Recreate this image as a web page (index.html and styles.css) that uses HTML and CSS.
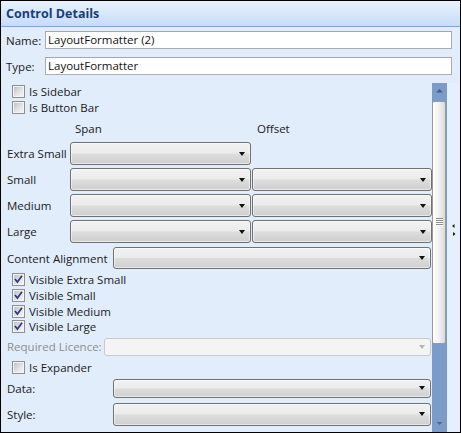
FILE: index.html
```html
<!DOCTYPE html>
<html>
<head>
<meta charset="utf-8">
<link rel="stylesheet" href="styles.css">
</head>
<body>
<div class="panel">
  <div class="header">Control Details</div>
  <div class="field first"><span class="flabel">Name:</span><div class="textbox">LayoutFormatter (2)</div></div>
  <div class="field"><span class="flabel">Type:</span><div class="textbox">LayoutFormatter</div></div>
  <div class="body">
    <div class="content">
      <div class="check"><span class="box"></span><span>Is Sidebar</span></div>
      <div class="check"><span class="box"></span><span>Is Button Bar</span></div>

      <div class="grid">
        <div class="head-row"><span></span><span class="colhead">Span</span><span class="colhead">Offset</span></div>
        <div class="grow xs"><span class="rlabel">Extra Small</span><div class="combo"><i class="arrow"></i></div></div>
        <div class="grow"><span class="rlabel">Small</span><div class="combo"><i class="arrow"></i></div><div class="combo"><i class="arrow"></i></div></div>
        <div class="grow"><span class="rlabel">Medium</span><div class="combo"><i class="arrow"></i></div><div class="combo"><i class="arrow"></i></div></div>
        <div class="grow"><span class="rlabel">Large</span><div class="combo"><i class="arrow"></i></div><div class="combo"><i class="arrow"></i></div></div>
      </div>

      <div class="row align"><span class="rlabel wide">Content Alignment</span><div class="combo fill"><i class="arrow"></i></div></div>

      <div class="checks">
        <div class="check"><span class="box on"><svg viewBox="0 0 13 13" width="13" height="13"><path d="M3.4 6.6 L5.4 9 L9.5 3.4" /></svg></span><span>Visible Extra Small</span></div>
        <div class="check"><span class="box on"><svg viewBox="0 0 13 13" width="13" height="13"><path d="M3.4 6.6 L5.4 9 L9.5 3.4" /></svg></span><span>Visible Small</span></div>
        <div class="check"><span class="box on"><svg viewBox="0 0 13 13" width="13" height="13"><path d="M3.4 6.6 L5.4 9 L9.5 3.4" /></svg></span><span>Visible Medium</span></div>
        <div class="check"><span class="box on"><svg viewBox="0 0 13 13" width="13" height="13"><path d="M3.4 6.6 L5.4 9 L9.5 3.4" /></svg></span><span>Visible Large</span></div>
      </div>

      <div class="row licence"><span class="rlabel lic disabled">Required Licence:</span><div class="combo fill off"><i class="arrow"></i></div></div>

      <div class="check expander"><span class="box"></span><span>Is Expander</span></div>

      <div class="row data"><span class="rlabel wide">Data:</span><div class="combo fill"><i class="arrow"></i></div></div>
      <div class="row style"><span class="rlabel wide">Style:</span><div class="combo fill"><i class="arrow"></i></div></div>
    </div>

    <div class="scrollbar">
      <div class="sb-btn"><svg width="15" height="18" viewBox="0 0 15 18"><path d="M4 9.5 L7.5 6 L11 9.5 Z" fill="#3f5f8f"/></svg></div>
      <div class="thumb">
        <div class="grip"><i></i><i></i><i></i><i></i></div>
      </div>
      <div class="track"></div>
      <div class="sb-btn"><svg width="15" height="18" viewBox="0 0 15 18"><path d="M4.5 8 L10.5 8 L7.5 11 Z" fill="#4d6a96"/></svg></div>
    </div>

    <div class="splitter">
      <svg width="13" height="14" viewBox="0 0 13 14"><path d="M5 2 L7.5 0 L7.5 4 Z" fill="#1a1a1a"/><path d="M6 8 L8.5 10 L6 12 Z" fill="#1a1a1a"/></svg>
    </div>
  </div>
</div>
</body>
</html>
```

FILE: styles.css
```css
* { box-sizing: border-box; }
html, body { margin: 0; padding: 0; background: #ffffff; }
body {
  font-family: "Open Sans", "Noto Sans", "Liberation Sans", sans-serif;
  font-size: 11.5px;
  color: #1a1a1a;
}
.panel {
  width: 461px;
  height: 433px;
  border: 1px solid #000;
  background: #e2edfb;
  display: flex;
  flex-direction: column;
  overflow: hidden;
}
.header {
  height: 26px;
  flex: none;
  border-bottom: 1px solid #7ea6da;
  background: linear-gradient(#e9f2fd, #d6e6fb 55%, #c4dcfa);
  color: #1b3d7a;
  font-weight: bold;
  font-size: 12.5px;
  line-height: 26px;
  padding-left: 5px;
}
.field {
  display: flex;
  align-items: center;
  height: 18px;
  margin-top: 8px;
  flex: none;
}
.field.first { margin-top: 4px; }
.flabel {
  width: 44px;
  padding-left: 5px;
  flex: none;
}
.textbox {
  width: 407px;
  height: 18px;
  border: 1px solid #abadb3;
  border-top-color: #a4a7ad;
  background: #fff;
  padding-left: 2px;
  line-height: 16px;
  color: #111;
}
.body {
  margin-top: 8px;
  flex: 1;
  display: flex;
  min-height: 0;
}
.content {
  width: 431px;
  flex: none;
  display: flex;
  flex-direction: column;
}
.check {
  height: 16px;
  display: flex;
  align-items: center;
  padding-left: 11px;
  gap: 4px;
}
.box {
  width: 13px;
  height: 13px;
  flex: none;
  border: 1px solid #8e8f8f;
  background: #f4f4f4;
  position: relative;
}
.box::before {
  content: "";
  position: absolute;
  left: 1px; top: 1px; right: 1px; bottom: 1px;
  background: linear-gradient(135deg, #bfc3c8, #e4e5e7 60%, #f4f4f4);
}
.box svg { position: absolute; left: -1px; top: -1px; z-index: 1; }
.box svg path { fill: none; stroke: #33398a; stroke-width: 1.7; stroke-linecap: square; }

.grid { display: flex; flex-direction: column; }
.head-row {
  height: 26px;
  display: grid;
  grid-template-columns: 68px 181px 180px;
  column-gap: 1px;
  align-items: center;
}
.colhead { padding-left: 5px; }
.grow {
  display: grid;
  grid-template-columns: 68px 181px 180px;
  column-gap: 1px;
  height: 23px;
  margin-top: 3px;
  align-items: center;
}
.grow.xs { margin-top: 1px; }
.rlabel { padding-left: 6px; white-space: nowrap; }
.combo {
  height: 100%;
  border: 1px solid #707070;
  border-radius: 3px;
  background: linear-gradient(#f2f2f2, #ebebeb 48%, #dddddd 52%, #cfcfcf);
  box-shadow: inset 0 0 0 1px rgba(255,255,255,0.55);
  display: flex;
  align-items: center;
  justify-content: flex-end;
  padding-right: 5px;
}
.arrow {
  width: 0; height: 0;
  border-left: 3.5px solid transparent;
  border-right: 3.5px solid transparent;
  border-top: 4px solid #111;
}
.row {
  display: flex;
  align-items: center;
  margin-right: 1px;
}
.row .combo.fill { flex: 1; }
.wide { width: 112px; flex: none; }
.lic { width: 103px; flex: none; }
.align { height: 22px; margin-top: 4px; }
.checks { margin-top: 3px; display: flex; flex-direction: column; }
.checks .check { height: 15.7px; }
.licence { height: 18px; margin-top: 3px; }
.disabled { color: #8d8d8d; }
.combo.off {
  border-color: #c9c9c9;
  background: #f4f4f4;
  box-shadow: none;
}
.combo.off .arrow { border-top-color: #b4b4b4; }
.expander { margin-top: 4px; }
.data { height: 19px; margin-top: 3px; }
.style { height: 23px; margin-top: 5px; }

.scrollbar {
  width: 15px;
  flex: none;
  background: #7b9bc9;
  display: flex;
  flex-direction: column;
}
.sb-btn { height: 18px; flex: none; }
.sb-btn svg { display: block; }
.thumb {
  height: 243px;
  margin-right: 1px;
  flex: none;
  border: 1px solid #9a9a9a;
  border-radius: 2px;
  background: linear-gradient(90deg, #ffffff, #f3f3f3 45%, #dadada);
  display: flex;
  align-items: center;
  justify-content: center;
  padding-bottom: 2px;
}
.grip { display: flex; flex-direction: column; gap: 1px; width: 7px; }
.grip i { display: block; height: 1px; background: #8c8c8c; box-shadow: 0 1px 0 #fff; }
.track { flex: 1; }
.splitter {
  width: 13px;
  flex: none;
  background: #e6f0fc;
  display: flex;
  align-items: flex-start;
  padding-top: 141px;
}
.splitter svg { display: block; }
```
